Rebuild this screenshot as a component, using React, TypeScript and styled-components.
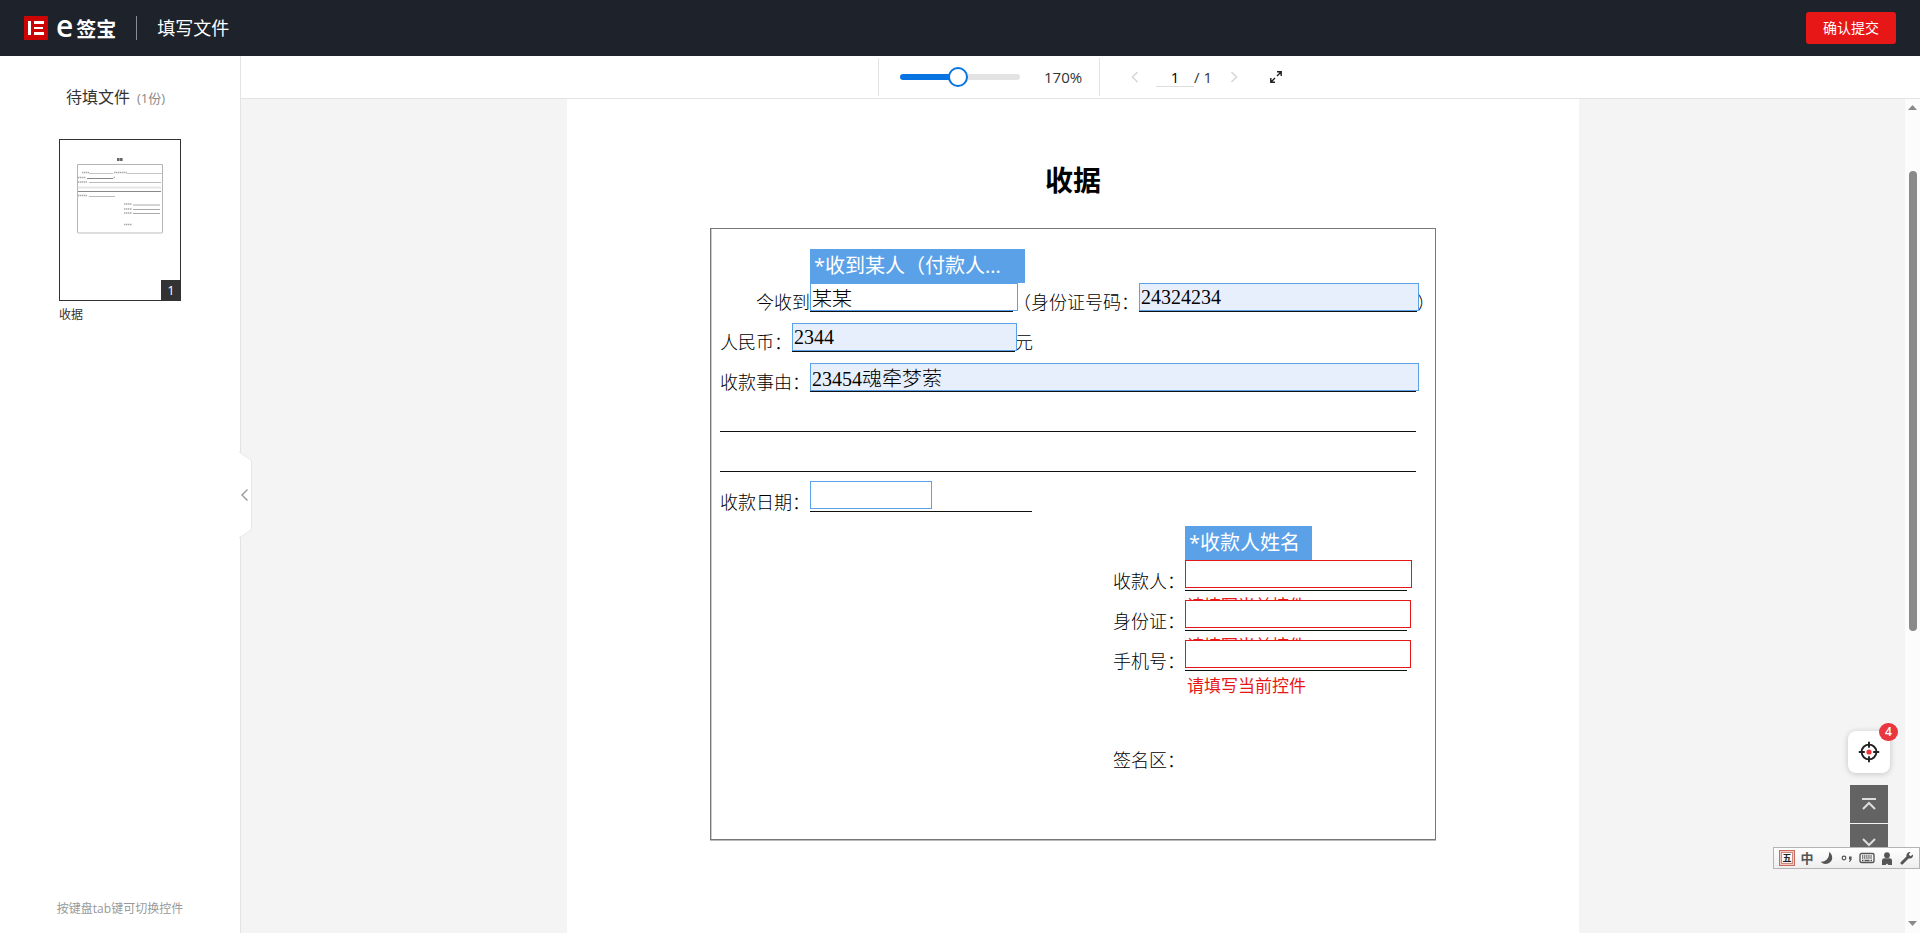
import React, { useState } from "react";
import styled, { createGlobalStyle, css } from "styled-components";

const uiFont = '"Open Sans", "Noto Sans CJK SC", sans-serif';
const docFont = '"Liberation Serif", "Noto Sans CJK SC", serif';

const GlobalStyle = createGlobalStyle`
  *, *::before, *::after { box-sizing: border-box; }
  body { margin: 0; font-family: ${uiFont}; color: #333; background: #fff; }
  button, input { font-family: inherit; margin: 0; }
  button { cursor: pointer; padding: 0; border: 0; background: none; }
  svg { display: block; }
`;

const Shell = styled.div`
  display: flex;
  flex-direction: column;
  height: 100vh;
  overflow: hidden;
`;

const Header = styled.header`
  display: flex;
  align-items: center;
  flex: none;
  height: 56px;
  padding: 0 24px;
  background: #1e222a;
  color: #fff;
`;

const Brand = styled.a`
  display: flex;
  align-items: center;
  gap: 8px;
  color: #fff;
  text-decoration: none;
`;

const BrandName = styled.span`
  display: flex;
  align-items: baseline;
  font-size: 20px;
  line-height: 24px;
  font-weight: 700;
`;

const BrandLetter = styled.span`
  font-size: 30px;
  line-height: 24px;
  font-weight: 600;
  margin-right: 3px;
`;

const HeaderDivider = styled.span`
  width: 1px;
  height: 24px;
  margin: 0 20px;
  background: #8a8d93;
`;

const HeaderTitle = styled.h1`
  margin: 0;
  font-size: 18px;
  line-height: 24px;
  font-weight: 400;
`;

const SubmitButton = styled.button`
  width: 90px;
  height: 32px;
  margin-left: auto;
  border-radius: 3px;
  background: #e81717;
  color: #fff;
  font-size: 14px;
  line-height: 20px;
`;

const Body = styled.div`
  display: flex;
  flex: 1;
  min-height: 0;
`;

const Sidebar = styled.aside`
  position: relative;
  z-index: 1;
  display: flex;
  flex-direction: column;
  flex: none;
  width: 241px;
  border-right: 1px solid #e3e3e3;
  background: #fff;
`;

const SidebarTitle = styled.h2`
  margin: 27px 0 0 66px;
  font-size: 16px;
  line-height: 28px;
  font-weight: 400;
`;

const FileCount = styled.span`
  margin-left: 7px;
  font-size: 13px;
  color: #888;
`;

const FileCard = styled.figure`
  width: 122px;
  margin: 27px 0 0 59px;
`;

const ThumbButton = styled.button`
  position: relative;
  display: block;
  width: 122px;
  height: 162px;
  border: 1px solid #333;
  background: #fff;
`;

const PageBadge = styled.span`
  position: absolute;
  right: -1px;
  bottom: -1px;
  width: 20px;
  height: 21px;
  background: #333;
  color: #fff;
  font-size: 13px;
  line-height: 21px;
  text-align: center;
`;

const FileName = styled.figcaption`
  margin-top: 5px;
  font-size: 12px;
  line-height: 18px;
`;

const Hint = styled.p`
  margin: auto 0 14px;
  font-size: 12px;
  line-height: 20px;
  color: #999;
  text-align: center;
`;

const CollapseButton = styled.button`
  position: absolute;
  top: 50%;
  right: -14px;
  width: 15px;
  height: 88px;
  transform: translateY(-50%);
`;

const Main = styled.main`
  position: relative;
  display: flex;
  flex-direction: column;
  flex: 1;
  min-width: 0;
`;

const Toolbar = styled.div`
  display: flex;
  justify-content: center;
  align-items: center;
  flex: none;
  height: 43px;
  border-bottom: 1px solid #e3e3e3;
  background: #fff;
  font-size: 15px;
  line-height: 20px;
`;

const ZoomGroup = styled.div`
  display: flex;
  align-items: center;
  gap: 24px;
  width: 222px;
  height: 38px;
  padding-left: 21px;
  border: solid #e3e3e3;
  border-width: 0 1px;
`;

const ZoomSlider = styled.input<{ $fill: number }>`
  appearance: none;
  width: 120px;
  height: 6px;
  border-radius: 3px;
  background: linear-gradient(
    to right,
    #0874e2 ${(p) => p.$fill}%,
    #e3e3e3 ${(p) => p.$fill}%
  );
  &::-webkit-slider-thumb {
    appearance: none;
    width: 20px;
    height: 20px;
    border: 2px solid #0874e2;
    border-radius: 50%;
    background: #fff;
  }
`;

const PageGroup = styled.div`
  display: flex;
  align-items: center;
  padding-left: 28px;
`;

const IconButton = styled.button`
  display: flex;
  align-items: center;
  justify-content: center;
  width: 14px;
  height: 20px;
  color: #d8d8d8;
`;

const PageInput = styled.input`
  width: 38px;
  height: 20px;
  margin-left: 14px;
  padding: 0;
  border: 0;
  border-bottom: 1px solid #ddd;
  background: none;
  font-size: 15px;
  line-height: 20px;
  text-align: center;
  color: #000;
`;

const PageTotal = styled.span`
  width: 33px;
`;

const ExpandButton = styled(IconButton)`
  margin-left: 28px;
  color: #222;
`;

const Viewer = styled.div`
  display: flex;
  flex: 1;
  min-height: 0;
  background: #f4f4f4;
`;

const Canvas = styled.div`
  display: flex;
  justify-content: center;
  align-items: flex-start;
  flex: 1;
  min-width: 0;
  overflow: hidden;
`;

const Paper = styled.form`
  flex: none;
  width: 1012px;
  min-height: 100%;
  padding: 59px 143px 518px;
  background: #fff;
  color: #000;
`;

const DocTitle = styled.h2`
  margin: 0 0 28px;
  font-family: "Noto Sans CJK SC", sans-serif;
  font-size: 28px;
  line-height: 42px;
  font-weight: 700;
  text-align: center;
`;

const Frame = styled.section`
  padding: 43px 0 69px 9px;
  border: 1px solid #777;
  box-shadow: inset 1px 0 0 #ccc, 0 1px 0 #bbb;
  font-family: ${docFont};
  font-size: 18px;
  line-height: 18px;
  font-weight: 300;
`;

const Row = styled.div<{ $indent?: number }>`
  display: flex;
  align-items: flex-end;
  height: 40px;
  padding-left: ${(p) => p.$indent ?? 0}px;
  white-space: nowrap;
`;

const PayeeGroup = styled.div`
  margin: 39px 0 59px 393px;
`;

const DocText = styled.span``;

const DocLabel = styled.label`
  flex: none;
`;

const Blank = styled.div<{ $width: number; $raised?: boolean }>`
  position: relative;
  flex: none;
  width: ${(p) => p.$width}px;
  height: ${(p) => (p.$raised ? 31 : 29)}px;
  border-bottom: 1px solid #111;
`;

const FieldInput = styled.input<{ $width: number; $tone?: "filled" | "error" }>`
  display: block;
  position: relative;
  width: ${(p) => p.$width}px;
  height: 28px;
  padding: 0 1px;
  border: 1px solid #5ba1e8;
  border-radius: 0;
  outline: none;
  background: #fff;
  color: #000;
  font-family: ${docFont};
  font-size: 20px;
  font-weight: 300;
  ${(p) => p.$tone === "filled" && css`background: #e8effc;`}
  ${(p) => p.$tone === "error" && css`border-color: #e81717;`}
`;

const FieldTag = styled.span<{ $width: number }>`
  position: absolute;
  z-index: 1;
  left: 0;
  bottom: 100%;
  width: ${(p) => p.$width}px;
  height: 34px;
  padding-left: 4px;
  background: #5ba1e8;
  color: #fff;
  font-family: ${uiFont};
  font-size: 20px;
  line-height: 34px;
  font-weight: 400;
`;

const FieldError = styled.span`
  position: absolute;
  top: 34px;
  left: 2px;
  color: #e81717;
  font-family: ${uiFont};
  font-size: 17px;
  line-height: 24px;
  font-weight: 400;
`;

const ScrollTrack = styled.div`
  display: flex;
  flex-direction: column;
  align-items: center;
  flex: none;
  width: 15px;
  padding: 6px 0 7px;
  background: #fcfcfc;
`;

const ScrollThumb = styled.div`
  width: 8px;
  height: 56%;
  margin: 61px 0 auto;
  border-radius: 4px;
  background: #8a8a8a;
`;

const FloatTools = styled.div`
  position: absolute;
  right: 30px;
  bottom: 71px;
  display: flex;
  flex-direction: column;
  align-items: center;
  gap: 1px;
`;

const LocateButton = styled.button`
  position: relative;
  display: flex;
  align-items: center;
  justify-content: center;
  width: 42px;
  height: 42px;
  margin-bottom: 11px;
  border-radius: 8px;
  background: #fff;
  box-shadow: 0 1px 6px rgba(0, 0, 0, 0.2);
`;

const CountBadge = styled.span`
  position: absolute;
  top: -8px;
  right: -8px;
  width: 19px;
  height: 18px;
  border-radius: 9px;
  background: #e8373f;
  color: #fff;
  font-size: 12px;
  line-height: 18px;
  font-weight: 600;
`;

const JumpButton = styled.button`
  display: flex;
  align-items: center;
  justify-content: center;
  width: 38px;
  height: 38px;
  background: #636363;
  color: #ddd;
`;

const ImeBar = styled.div`
  position: fixed;
  z-index: 2;
  right: 0;
  bottom: 64px;
  display: flex;
  align-items: center;
  gap: 4px;
  width: 147px;
  height: 22px;
  padding-left: 5px;
  border: 1px solid #b4b4b4;
  background: linear-gradient(#fff, #eee);
  color: #555;
`;

const ImeKey = styled.span`
  display: flex;
  align-items: center;
  justify-content: center;
  width: 16px;
  height: 16px;
  font-size: 13px;
  line-height: 16px;
  font-weight: 700;
`;

const ImeLogo = styled(ImeKey)`
  border: 1px solid #c96a5c;
  box-shadow: inset 0 0 0 1px #f3c9c2, inset 0 0 0 2px #c98a80;
  color: #222;
  font-size: 9px;
`;

function LogoMark() {
  return (
    <svg width="24" height="24" viewBox="0 0 24 24" aria-hidden="true">
      <rect width="24" height="24" fill="#cc0404" />
      <path d="M4 5h3v14H4zM10 5h10v3H10zM10 11h9v2H10zM10 16h10v3H10z" fill="#fff" />
    </svg>
  );
}

function Chevron({ flip }: { flip?: boolean }) {
  return (
    <svg width="8" height="12" viewBox="0 0 8 12" fill="none" stroke="currentColor" strokeWidth="1.6">
      <path d={flip ? "M1.5 1 6.5 6 1.5 11" : "M6.5 1 1.5 6 6.5 11"} />
    </svg>
  );
}

function ExpandIcon() {
  return (
    <svg width="12" height="12" viewBox="0 0 12 12" fill="none" stroke="currentColor" strokeWidth="1.4">
      <path d="M7 .8h4.2V5M11 1 7 5M5 11.2H.8V7M1 11l4-4" />
    </svg>
  );
}

function HandleShape() {
  return (
    <svg width="15" height="88" viewBox="0 0 15 88" fill="none">
      <path d="M0 1 12.5 9.5V78.5L0 87z" fill="#fff" />
      <path d="M0 1 12.5 9.5V78.5L0 87" stroke="#e8e8e8" />
      <path d="M8.5 38.5 3 44l5.5 5.5" stroke="#999" strokeWidth="1.4" />
    </svg>
  );
}

function PagePreview() {
  return (
    <svg width="120" height="160" viewBox="0 0 120 160" fill="none" aria-hidden="true">
      <path d="M57 19.5h6" stroke="#666" strokeWidth="3" strokeDasharray="2.6 .4" />
      <path d="M17.5 24.500h85v68h-85z" stroke="#b4b4b4" />
      <path d="M18 93h84" stroke="#ddd" strokeWidth="2" />
      <path d="M29 33.500h24M67 33.500h35" stroke="#c4c4c4" />
      <path d="M27 38.500h26" stroke="#888" />
      <path d="M29 42.500h72M29 56.500h26" stroke="#bbb" />
      <path d="M18 47.500h83" stroke="#e6e6e6" strokeWidth="2" />
      <path d="M18 51.500h83" stroke="#888" />
      <path d="M73 65h27M73 69.500h27M73 73.500h27" stroke="#aaa" />
      <path
        d="M22 32.500h7M54 32.500h13M18 37.500h8M53.500 37.500h1.500M18 42h9M18 55.500h9M64 64h8M64 69h8M64 73h8M64 84.500h8"
        stroke="#aaa"
        strokeWidth="1.4"
        strokeDasharray="1.4 .5"
      />
    </svg>
  );
}

function TargetIcon() {
  return (
    <svg width="22" height="22" viewBox="0 0 22 22" fill="none">
      <circle cx="11" cy="11" r="7.4" stroke="#222" strokeWidth="1.9" />
      <path d="M11 .8v6M11 15.200v6M.8 11h6M15.200 11h6" stroke="#222" strokeWidth="1.9" />
      <circle cx="11" cy="11" r="2.6" fill="#f5333a" />
    </svg>
  );
}

function JumpIcon({ down }: { down?: boolean }) {
  return (
    <svg width="14" height="14" viewBox="0 0 14 14" fill="none" stroke="currentColor" strokeWidth="2">
      <path d={down ? "M1 3l6 6 6-6M0 12.500h14" : "M0 2h14M1 12l6-6 6 6"} />
    </svg>
  );
}

function MoonIcon() {
  return (
    <svg width="14" height="14" viewBox="0 0 14 14" fill="currentColor">
      <path d="M9 1C14 4 13.5 12.5 5.5 13 3.5 13 1.5 12 .8 10.6 5.5 11.2 9.8 7 9 1z" />
    </svg>
  );
}

function PunctuationIcon() {
  return (
    <svg width="12" height="12" viewBox="0 0 12 12" fill="none">
      <circle cx="3" cy="6" r="1.8" stroke="currentColor" strokeWidth="1.2" />
      <path d="M8 4.500h2.600v3L9 10H8l1-2.500H8z" fill="currentColor" />
    </svg>
  );
}

function KeyboardIcon() {
  return (
    <svg width="16" height="12" viewBox="0 0 16 12" fill="none" stroke="currentColor">
      <rect x="1" y="1.5" width="14" height="9" rx="1.5" strokeWidth="1.4" />
      <path d="M3 4h10M3 6h10" strokeDasharray="1.3 .8" strokeWidth="1.3" />
      <path d="M3 8.500h1.500M5.500 8.500h5M11.500 8.500H13" strokeWidth="1.3" />
    </svg>
  );
}

function PersonIcon() {
  return (
    <svg width="12" height="13" viewBox="0 0 12 13" fill="currentColor">
      <circle cx="6" cy="3.2" r="2.9" />
      <path d="M1 8.500Q1 6.200 3.500 6.200h5Q11 6.200 11 8.500V13H7.500l-1.500-1.500L4.500 13H1z" />
    </svg>
  );
}

function WrenchIcon() {
  return (
    <svg width="14" height="14" viewBox="0 0 14 14" fill="none">
      <path d="M2 12 8 6" stroke="currentColor" strokeWidth="3" strokeLinecap="round" />
      <path d="M10.5 1 8.8 3.500l1.700 1.700L13 3.500C13.500 6 11.500 8 9 7.500L6.500 5.500C6 3 8 .5 10.500 1z" fill="currentColor" />
    </svg>
  );
}

interface FieldProps {
  id: string;
  line: number;
  width: number;
  value?: string;
  tone?: "filled" | "error";
  raised?: boolean;
  tag?: string;
  tagWidth?: number;
}

function Field({ id, line, width, value = "", tone, raised, tag, tagWidth = 0 }: FieldProps) {
  const [text, setText] = useState(value);
  return (
    <Blank $width={line} $raised={raised}>
      {tag && <FieldTag $width={tagWidth}>{tag}</FieldTag>}
      {tone === "error" && <FieldError>请填写当前控件</FieldError>}
      <FieldInput
        id={id}
        $width={width}
        $tone={tone}
        value={text}
        onChange={(e) => setText(e.target.value)}
      />
    </Blank>
  );
}

function Receipt() {
  return (
    <Paper onSubmit={(e) => e.preventDefault()}>
      <DocTitle>收据</DocTitle>
      <Frame>
        <Row $indent={36}>
          <DocLabel htmlFor="payer">今收到</DocLabel>
          <Field id="payer" line={203} width={208} value="某某" tag="*收到某人（付款人..." tagWidth={215} />
          <DocLabel htmlFor="payer-id">（身份证号码：</DocLabel>
          <Field id="payer-id" line={278} width={280} value="24324234" tone="filled" />
          <DocText>）</DocText>
        </Row>
        <Row>
          <DocLabel htmlFor="amount">人民币：</DocLabel>
          <Field id="amount" line={223} width={225} value="2344" tone="filled" />
          <DocText>元</DocText>
        </Row>
        <Row>
          <DocLabel htmlFor="reason">收款事由：</DocLabel>
          <Field id="reason" line={606} width={609} value="23454魂牵梦萦" tone="filled" />
        </Row>
        <Row>
          <Blank $width={696} />
        </Row>
        <Row>
          <Blank $width={696} />
        </Row>
        <Row>
          <DocLabel htmlFor="date">收款日期：</DocLabel>
          <Field id="date" line={222} width={122} raised />
        </Row>
        <PayeeGroup>
          <Row>
            <DocLabel htmlFor="payee">收款人：</DocLabel>
            <Field id="payee" line={222} width={227} tone="error" raised tag="*收款人姓名" tagWidth={127} />
          </Row>
          <Row>
            <DocLabel htmlFor="payee-id">身份证：</DocLabel>
            <Field id="payee-id" line={222} width={226} tone="error" raised />
          </Row>
          <Row>
            <DocLabel htmlFor="phone">手机号：</DocLabel>
            <Field id="phone" line={222} width={226} tone="error" raised />
          </Row>
        </PayeeGroup>
        <Row $indent={393}>
          <DocText>签名区：</DocText>
        </Row>
      </Frame>
    </Paper>
  );
}

export default function App() {
  const [zoom, setZoom] = useState(170);
  return (
    <Shell>
      <GlobalStyle />
      <Header>
        <Brand href="#">
          <LogoMark />
          <BrandName>
            <BrandLetter>e</BrandLetter>签宝
          </BrandName>
        </Brand>
        <HeaderDivider />
        <HeaderTitle>填写文件</HeaderTitle>
        <SubmitButton type="button">确认提交</SubmitButton>
      </Header>
      <Body>
        <Sidebar>
          <SidebarTitle>
            待填文件<FileCount>(1份)</FileCount>
          </SidebarTitle>
          <FileCard>
            <ThumbButton type="button" aria-label="收据">
              <PagePreview />
              <PageBadge>1</PageBadge>
            </ThumbButton>
            <FileName>收据</FileName>
          </FileCard>
          <Hint>按键盘tab键可切换控件</Hint>
          <CollapseButton type="button" aria-label="收起">
            <HandleShape />
          </CollapseButton>
        </Sidebar>
        <Main>
          <Toolbar>
            <ZoomGroup>
              <ZoomSlider
                type="range"
                min={50}
                max={300}
                value={zoom}
                aria-label="缩放"
                $fill={((zoom - 50) / 250) * 100}
                onChange={(e) => setZoom(Number(e.target.value))}
              />
              <span>{zoom}%</span>
            </ZoomGroup>
            <PageGroup>
              <IconButton type="button" aria-label="上一页">
                <Chevron />
              </IconButton>
              <PageInput aria-label="页码" defaultValue="1" />
              <PageTotal>/ 1</PageTotal>
              <IconButton type="button" aria-label="下一页">
                <Chevron flip />
              </IconButton>
              <ExpandButton type="button" aria-label="全屏">
                <ExpandIcon />
              </ExpandButton>
            </PageGroup>
          </Toolbar>
          <Viewer>
            <Canvas>
              <Receipt />
            </Canvas>
            <ScrollTrack aria-hidden="true">
              <svg width="9" height="5" viewBox="0 0 9 5">
                <path d="M0 5 4.500 0 9 5z" fill="#8a8a8a" />
              </svg>
              <ScrollThumb />
              <svg width="9" height="5" viewBox="0 0 9 5">
                <path d="M0 0 4.500 5 9 0z" fill="#8a8a8a" />
              </svg>
            </ScrollTrack>
          </Viewer>
          <FloatTools>
            <LocateButton type="button" aria-label="定位必填控件">
              <TargetIcon />
              <CountBadge>4</CountBadge>
            </LocateButton>
            <JumpButton type="button" aria-label="回到顶部">
              <JumpIcon />
            </JumpButton>
            <JumpButton type="button" aria-label="前往底部">
              <JumpIcon down />
            </JumpButton>
          </FloatTools>
        </Main>
      </Body>
      <ImeBar>
        <ImeLogo>五</ImeLogo>
        <ImeKey>中</ImeKey>
        <ImeKey><MoonIcon /></ImeKey>
        <ImeKey><PunctuationIcon /></ImeKey>
        <ImeKey><KeyboardIcon /></ImeKey>
        <ImeKey><PersonIcon /></ImeKey>
        <ImeKey><WrenchIcon /></ImeKey>
      </ImeBar>
    </Shell>
  );
}
